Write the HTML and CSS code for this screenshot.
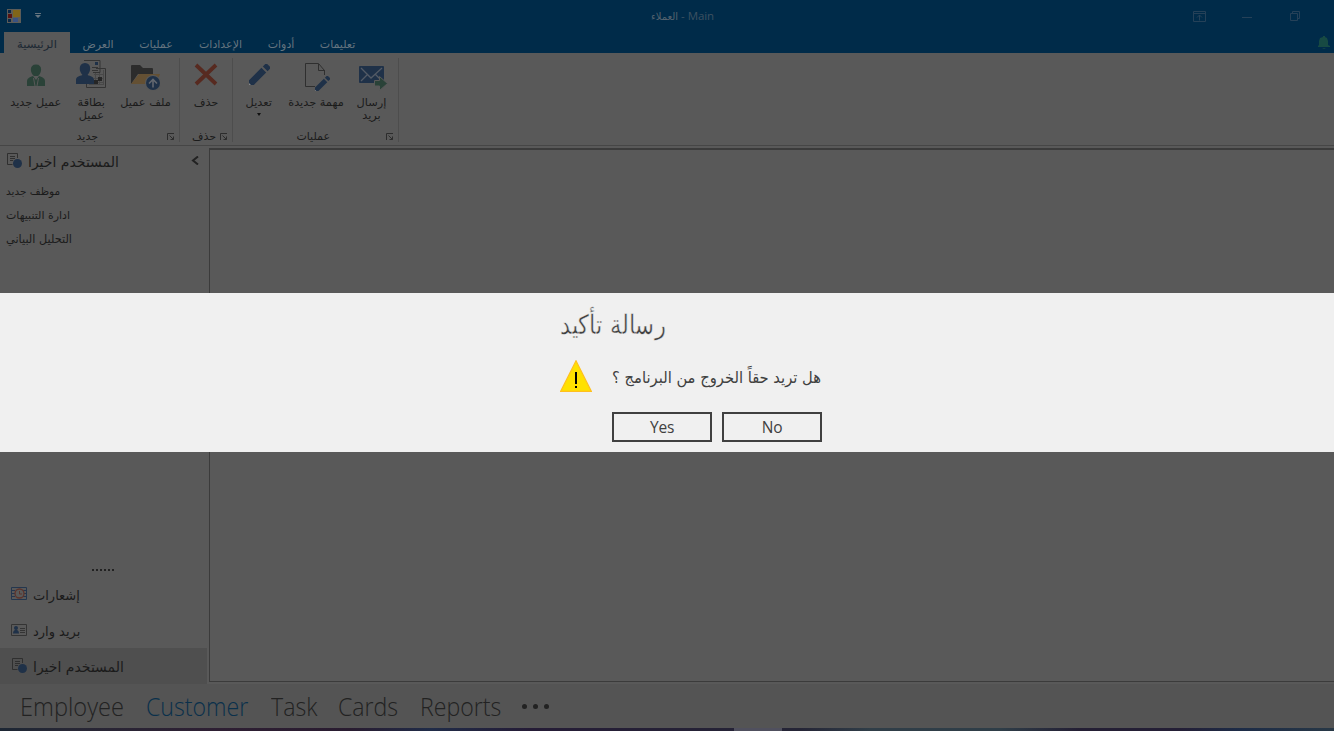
FILE: index.html
```html
<!DOCTYPE html>
<html lang="ar">
<head>
<meta charset="utf-8">
<title>العملاء - Main</title>
<link rel="stylesheet" href="styles.css">
</head>
<body>
<svg class="defs" width="0" height="0">
  <symbol id="launcher" viewBox="0 0 8 8"><path d="M.5 7V.5H7M2.500 2.500l4 4M6.500 3.500v3h-3" fill="none" stroke="#2c2c2c"/></symbol>
  <symbol id="recent" viewBox="0 0 16 16"><path d="M5.500 11.500H.5V.5h10V5M3 3.500h5M3 5.500h5M3 7.500h3" fill="none" stroke="#2f2f2f"/><circle cx="10.500" cy="10.500" r="4.500" fill="#1f3148"/></symbol>
  <symbol id="pencil" viewBox="0 0 22 22"><path d="M0 22v-5L13 4l5 5L5 22zM14.500 2.500L17 0h2l3 3v2l-2.500 2.500z" fill="#1f3148"/><path d="M0 20l2 2H0z" fill="#8a8a8a"/></symbol>
</svg>
<div class="app">
  <header class="titlebar">
    <svg class="logo" width="14" height="14" viewBox="0 0 14 14"><path fill="#5c5c58" d="M0 0h14v14H0z"/><path fill="#0a2747" d="M1 1h3v3H1zM1 10h3v3H1z"/><path fill="#3a5282" d="M6 9h5v4H6z"/><path fill="#571313" d="M1 5h4v4H1z"/><path fill="#806519" d="M6 1h7v7H6z"/></svg>
    <svg class="quick" width="6" height="6" viewBox="0 0 6 6"><path fill="#65747f" d="M0 0h6v1H0zM0 2h6L3 5z"/></svg>
    <div class="caption"><span class="ar" dir="rtl">العملاء</span> - Main</div>
    <div class="winbtns">
      <svg width="13" height="11" viewBox="0 0 13 11"><path d="M.5.500h12v10H.5zM.5 2.500h12M6.500 9.500V4M4 6.500L6.500 4 9 6.500" fill="none" stroke="#254158"/></svg>
      <svg width="10" height="11" viewBox="0 0 10 11"><path d="M0 6.500h10" stroke="#254158"/></svg>
      <svg width="10" height="10" viewBox="0 0 10 10"><path d="M.5 2.500h7v7h-7zM2.500 2.500v-2h7v7h-2" fill="none" stroke="#254158"/></svg>
    </div>
  </header>
  <nav class="tabs">
    <div class="tab t1 active"><span>الرئيسية</span></div>
    <div class="tab t2"><span>العرض</span></div>
    <div class="tab t3"><span>عمليات</span></div>
    <div class="tab t4"><span>الإعدادات</span></div>
    <div class="tab t5"><span>أدوات</span></div>
    <div class="tab t6"><span>تعليمات</span></div>
    <svg class="bell" width="12" height="13" viewBox="0 0 12 13"><path d="M5 0h2v1l2 1 1 3v4l2 1v1H0v-1l1-1V5l1-3 3-1zM4 12h4l-2 1z" fill="#174a43"/></svg>
  </nav>
  <section class="ribbon">
    <div class="group g1">
      <div class="items">
        <div class="item i1"><svg width="30" height="30" viewBox="0 0 30 30"><path d="M15 4.500c7 0 6 8.500 2 11.500h-4c-4-3-5-11.500 2-11.500zM6 26v-4.500c0-3 2-4 6-5.500l3 4 3-4c4 1.500 6 2.500 6 5.500V26z" fill="#2a4238"/><path d="M12.500 18l1.500 8M17.500 18L16 26" stroke="#595959"/></svg><span>عميل جديد</span></div>
        <div class="item i2"><svg width="30" height="30" viewBox="0 0 30 30"><path d="M8 .5h16v12M17 12.500h7M20 8.500h9.500v19h-19V24M16 7.500h6M16 10.500h6" fill="none" stroke="#343434"/><path d="M18 14.500h9M18 18.500h9M18 22.500h9M19.500 13v12M23.500 13v12M13 24.500h14M27.500 10v15" stroke="#484848"/><path d="M22 17h4v4h-4zM18 20h4v4h-4z" fill="#262626"/><path d="M19 2h3v3h-3zM9 3c7 0 6 9 2.500 12 3 1 6.500 2 6.500 5v4H0v-4c0-3 3-4 6.500-5C3 12 2 3 9 3z" fill="#1f3148"/></svg><span>بطاقة<br>عميل</span></div>
        <div class="item i3"><svg width="30" height="30" viewBox="0 0 30 30"><path d="M1 6q0-1 1-1h8l3 3h9q1 0 1 1v5H8L1 24z" fill="#2c2c2c"/><path d="M1 24l8-10h21l-4 10z" fill="#645033"/><circle cx="23" cy="23" r="8" fill="#595959"/><circle cx="23" cy="23" r="7" fill="#1f3148"/><path d="M23 27.500V20M19 23.500l4-4 4 4" fill="none" stroke="#62676f" stroke-width="1.600"/></svg><span>ملف عميل</span></div>
      </div>
      <div class="foot"><span>جديد</span><svg width="8" height="8"><use href="#launcher"/></svg></div>
    </div>
    <div class="group g2">
      <div class="items"><div class="item i4"><svg width="30" height="30" viewBox="0 0 30 30"><path d="M5 5l20 19M25 5L5 24" stroke="#572a20" stroke-width="3.800"/></svg><span>حذف</span></div></div>
      <div class="foot"><span>حذف</span><svg width="8" height="8"><use href="#launcher"/></svg></div>
    </div>
    <div class="group g3">
      <div class="items">
        <div class="item i5"><svg width="30" height="30" viewBox="0 0 30 30"><use href="#pencil" x="5" y="4" width="21" height="21"/></svg><span>تعديل</span><i class="arrow"></i></div>
        <div class="item i6"><svg width="30" height="30" viewBox="0 0 30 30"><path d="M14 26.500H4.500v-23h13l6 7V15M17.500 4v6.500H24" fill="none" stroke="#2f2f2f"/><use href="#pencil" x="14" y="16" width="15" height="15"/></svg><span>مهمة جديدة</span></div>
        <div class="item i7"><svg width="30" height="30" viewBox="0 0 30 30"><rect x="2" y="6" width="25" height="17" rx="1" fill="#1f3148"/><path d="M4 8l10 10L25 8M4 21l6-6M25 21l-7-7" fill="none" stroke="#535a65" stroke-width="1.300"/><path d="M17.500 20.500h5v-4l8 7-8 7v-4.500h-5z" fill="#2a4238" stroke="#595959"/></svg><span>إرسال<br>بريد</span></div>
      </div>
      <div class="foot"><span>عمليات</span><svg width="8" height="8"><use href="#launcher"/></svg></div>
    </div>
  </section>
  <main class="body">
    <aside class="side">
      <div class="sidehead"><svg width="16" height="16"><use href="#recent"/></svg><span>المستخدم اخيرا</span><svg class="chev" width="8" height="9" viewBox="0 0 8 9"><path d="M7 .5L2 4.500l5 4" fill="none" stroke="#222" stroke-width="2"/></svg></div>
      <ul class="recent">
        <li><span class="r1">موظف جديد</span></li>
        <li><span class="r2">ادارة التنبيهات</span></li>
        <li><span class="r3">التحليل البياني</span></li>
      </ul>
      <div class="grip"><i></i><i></i><i></i><i></i><i></i><i></i></div>
      <div class="sidebtn"><svg width="16" height="16" viewBox="0 0 16 16"><path d="M.5 1.500h15v12H.5zM1 4.500h3M1 7.500h3M1 10.500h3M12 4.500h3M12 7.500h3M12 10.500h3" fill="none" stroke="#24364e"/><circle cx="8.500" cy="7.500" r="4.500" fill="#595959" stroke="#5c332b" stroke-width="1.300"/><path d="M8.500 5v3H11" fill="none" stroke="#5c332b"/></svg><span class="s1">إشعارات</span></div>
      <div class="sidebtn"><svg width="16" height="16" viewBox="0 0 16 16"><path d="M.5 2.500h15v11H.5zM9 6.500h5M9 8.500h5M9 10.500h5" fill="none" stroke="#343434"/><circle cx="5" cy="6" r="2" fill="#1f3148"/><path d="M2 11.500c0-5 6-5 6 0z" fill="#1f3148"/></svg><span class="s2">بريد وارد</span></div>
      <div class="sidebtn selected"><svg width="16" height="16"><use href="#recent" x="1"/></svg><span class="s3">المستخدم اخيرا</span></div>
    </aside>
    <section class="workspace"></section>
  </main>
  <nav class="modules">
    <div class="m1"><span>Employee</span></div><div class="m2 current"><span>Customer</span></div><div class="m3"><span>Task</span></div><div class="m4"><span>Cards</span></div><div class="m5"><span>Reports</span></div>
    <div class="more"><i></i><i></i><i></i></div>
  </nav>
  <div class="taskbar"><i></i></div>
  <div class="dialog" role="dialog">
    <div class="dialogbox">
      <h1><span>رسالة تأكيد</span></h1>
      <div class="message">
        <svg width="32" height="32" viewBox="0 0 32 32"><path d="M16 .8L31.400 31.400H.6z" fill="#ffe100" stroke="#ffc01e" stroke-width="1.200"/><path d="M15 12h2v12h-2zM15 26h2v2h-2z" fill="#000"/></svg>
        <p><span dir="rtl">هل تريد حقاً الخروج من البرنامج ؟</span></p>
      </div>
      <div class="buttons"><button>Yes</button><button>No</button></div>
    </div>
  </div>
</div>
</body>
</html>
```
FILE: styles.css
```css
* { box-sizing: border-box; }
body { margin: 0; background: #595959; font-family: "DejaVu Sans", sans-serif; font-size: 11px; color: #1b1b1b; }
.defs { position: absolute; }
.app { position: relative; width: 1334px; height: 731px; display: flex; flex-direction: column; overflow: hidden; }
svg { display: block; flex: none; }
span { white-space: nowrap; }
.titlebar { height: 32px; background: #002b49; display: flex; align-items: center; padding-left: 7px; }
.quick { margin-left: 14px; }
.caption { margin: -2px 0 0 610px; width: 90px; font: 11.500px "Open Sans", sans-serif; color: #3d5161; white-space: nowrap; letter-spacing: -.1px; }
.caption .ar { font: 10px "DejaVu Sans", sans-serif; letter-spacing: 0; color: #53626e; }
.winbtns { margin-left: auto; display: flex; align-items: center; gap: 37px; padding-right: 34px; }
.winbtns svg:first-child { margin-right: -1px; }
.winbtns svg:nth-child(-n+2) { transform: translateX(-1px); }
.tabs { height: 21px; background: #002b49; display: flex; padding-left: 4px; color: #65747f; }
.tab { display: flex; justify-content: center; align-items: center; padding-top: 3px; }
.t1 { width: 66px; } .t2 { width: 56px; } .t3 { width: 60px; } .t4 { width: 69px; } .t5 { width: 52px; } .t6 { width: 61px; }
.t1 span { display: block; transform: scaleX(1.05); }
.active { background: #595959; color: #1c2833; }
.bell { margin: 4px 4px 0 auto; }
.ribbon { height: 93px; border-bottom: 1px solid #464646; display: flex; }
.group { height: 84px; margin-top: 5px; border-right: 1px solid #4d4d4d; display: flex; flex-direction: column; }
.g1 { width: 180px; } .g2 { width: 53px; } .g3 { width: 166px; }
.items { flex: 1; display: flex; }
.g1 .items { padding-left: 8px; }
.item { display: flex; flex-direction: column; align-items: center; text-align: center; line-height: 13px; padding-top: 2px; }
.item svg { margin-bottom: 6px; overflow: visible; }
.item span { transform: scaleX(1.03); }
.i1 { width: 56px; } .i2 { width: 54px; } .i3 { width: 54px; } .i4 { width: 51px; } .i5 { width: 52px; } .i6 { width: 61px; } .i7 { width: 51px; }
.arrow { border: 2.500px solid transparent; border-top: 3px solid #111; border-bottom: 0; margin-top: 4px; }
.foot { height: 12px; display: flex; align-items: center; justify-content: flex-end; line-height: 12px; padding-top: 2px; }
.foot svg { margin-right: 4px; }
.g1 .foot span { margin-right: 69px; } .g2 .foot span { margin-right: 4px; } .g3 .foot span { margin-right: 56px; }
.body { height: 538px; display: flex; }
.side { width: 207px; display: flex; flex-direction: column; }
.sidehead { height: 33px; display: flex; align-items: center; padding: 0 7px 2px 7px; font-size: 14px; }
.sidehead span { margin-left: 5px; }
.sidehead svg { margin-top: -1px; }
.sidehead .chev { margin: -2px 1px 0 auto; }
.recent { list-style: none; margin: 0; padding: 0 6px; }
.recent li { height: 24px; display: flex; align-items: center; }
.r1 { font-size: 10.500px; } .r3 { font-size: 11.300px; }
.grip { margin-top: auto; height: 8px; margin-bottom: -1px; display: flex; gap: 2px; padding-left: 92px; }
.grip i { width: 2px; height: 2px; background: #222; }
.sidebtn { height: 36px; display: flex; align-items: center; gap: 6px; padding: 2px 0 0 11px; font-size: 13px; }
.sidebtn svg { margin-top: -3px; }
.s3 { font-size: 14px; }
.selected { background: #4f4f4f; }
.workspace { flex: 1; margin: 2px 0 2px 2px; border: 1px solid #3b3b3b; border-top-width: 2px; border-right: 0; }
.modules { height: 44px; background: #545454; display: flex; align-items: center; padding: 0 0 0 20px; font: 300 25px "Open Sans", sans-serif; color: #222; }
.modules span { display: inline-block; line-height: 44px; transform: scaleX(.925); transform-origin: left; }
.modules .m1 span { transform: scaleX(.945); }
.m1 { width: 126px; } .m2 { width: 125px; } .m3 { width: 67px; } .m4 { width: 82px; } .m5 { width: 102px; }
.modules .current { color: #0a304b; }
.more { display: flex; gap: 6px; }
.more i { width: 5px; height: 5px; border-radius: 50%; background: #222; }
.taskbar { height: 3px; background: linear-gradient(90deg, #1d2734, #272735 70px, #2e1f33 220px, #291c30 350px, #202c48 430px, #251c36 530px, #252536 800px, #303e48 870px, #2f3e48 1000px, #241f34 1080px, #241f36 1180px, #1d2c47 1240px, #283846); }
.taskbar i { display: block; width: 48px; height: 3px; margin-left: 734px; background: #50505e; }
.dialog { position: absolute; left: 0; top: 293px; width: 1334px; height: 159px; background: #f0f0f0; color: #404040; }
.dialogbox { width: 262px; margin-left: 560px; display: flex; flex-direction: column; }
h1 { margin: 0; height: 67px; display: flex; align-items: center; font-size: 27px; font-weight: 200; padding-bottom: 5px; }
h1 span { transform: scaleX(.84); transform-origin: left; -webkit-text-stroke: .5px #f0f0f0; }
.message { height: 32px; display: flex; gap: 20px; align-items: center; }
.message p { margin: 3px 0 0; font-size: 16px; }
.message p span { display: block; width: 209px; transform: scaleX(.92); transform-origin: right; }
.buttons { display: flex; gap: 10px; margin: 20px 0 0 52px; }
button { width: 100px; height: 30px; padding: 0; border: 2px solid #404040; background: none; color: #404040; font: 15.500px "Open Sans", sans-serif; letter-spacing: -.2px; }
```
